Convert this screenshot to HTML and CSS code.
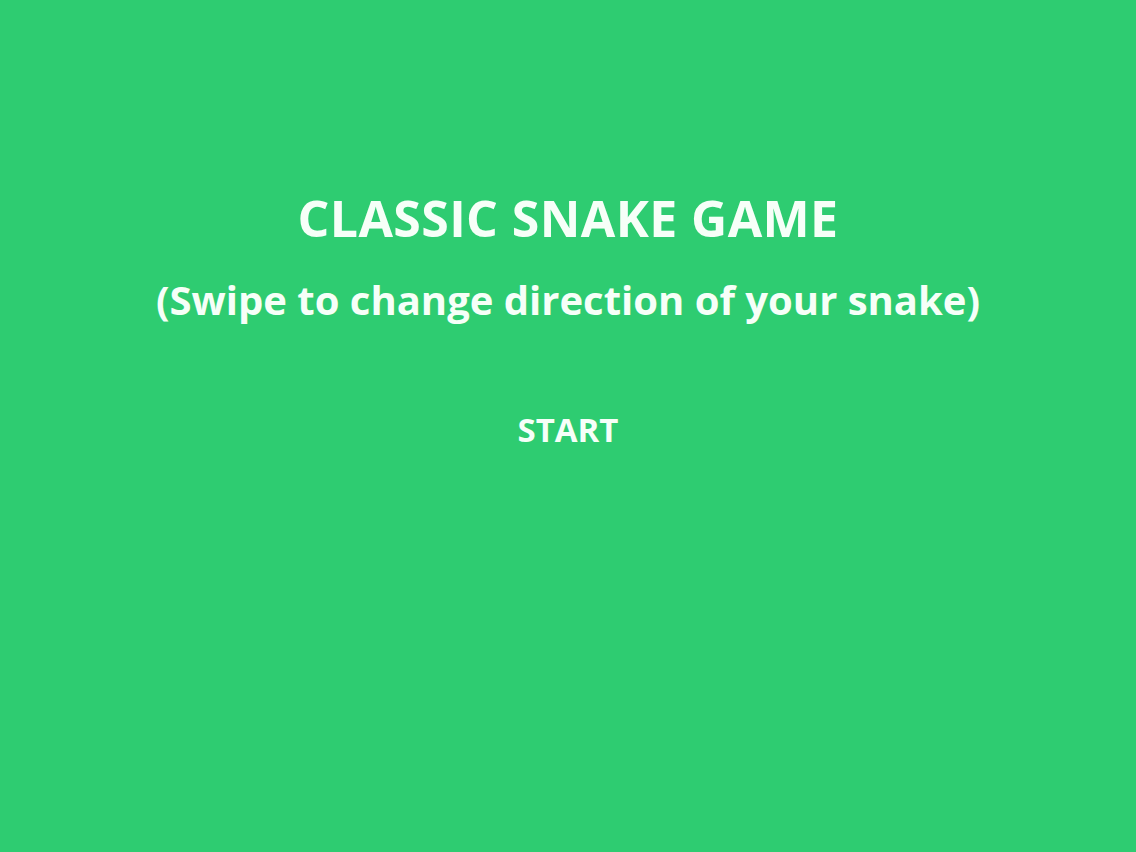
FILE: index.html
```html
<!DOCTYPE html>
<html lang="en">
<head>
<meta charset="utf-8">
<title>Classic Snake Game</title>
<link rel="stylesheet" href="styles.css">
</head>
<body>
  <main class="menu">
    <h1 class="menu-title">CLASSIC SNAKE GAME</h1>
    <p class="menu-hint">(Swipe to change direction of your snake)</p>
    <button class="menu-start" type="button">START</button>
  </main>
</body>
</html>
```
FILE: styles.css
```css
html, body {
  margin: 0;
  padding: 0;
  height: 100%;
}

body {
  background: #2ecc71;
  color: #f6fff8;
  font-family: "Comic Sans MS", "Open Sans", sans-serif;
  font-weight: 700;
}

.menu {
  display: flex;
  flex-direction: column;
  align-items: center;
  padding-top: 188px;
}

.menu-title {
  margin: 0;
  font-size: 50px;
  line-height: 60px;
  font-weight: 700;
  letter-spacing: 0.4px;
}

.menu-hint {
  margin: 27px 0 0;
  font-size: 40px;
  line-height: 50px;
}

.menu-start {
  margin-top: 85px;
  padding: 0;
  border: 0;
  background: none;
  color: inherit;
  font: inherit;
  font-size: 33px;
  line-height: 40px;
  cursor: pointer;
}
```
